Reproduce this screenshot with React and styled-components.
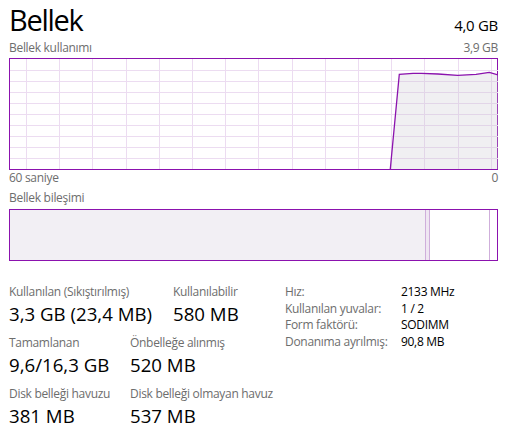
import React from 'react';
import styled, { createGlobalStyle } from 'styled-components';

const PURPLE = '#8b12ae';
const GRID = '#ecdcf1';
const MUTED = '#6d6d6d';

const GlobalStyle = createGlobalStyle`
  body {
    margin: 0;
    background: #fff;
    color: #000;
    font-family: "Open Sans", "Noto Sans", sans-serif;
  }
`;

const usage = [
  [380.3, 110], [389.3, 15.3], [403, 14.3], [411.7, 14.3], [428, 15], [447.7, 16.3],
  [466, 15.3], [479.3, 13.3], [488, 16],
];

function Graph() {
  const cols = [];
  for (let k = 0; k < 15; k++) cols.push(Math.round(16 + 33.2 * k) + 0.5);
  const rows = [];
  for (let j = 1; j < 10; j++) rows.push(j * 11 + 0.5);
  const line = usage.map(([x, y]) => `${x},${y}`).join(' ');
  const area = `${line} 488,110 380.3,110`;

  return (
    <svg width="488" height="110" viewBox="0 0 488 110">
      {cols.map((x) => (
        <line key={'c' + x} x1={x} y1="0" x2={x} y2="110" stroke={GRID} strokeWidth="1" />
      ))}
      {rows.map((y) => (
        <line key={'r' + y} x1="0" y1={y} x2="488" y2={y} stroke={GRID} strokeWidth="1" />
      ))}
      <polygon points={area} fill="rgba(200,195,206,0.27)" />
      <polyline points={line} fill="none" stroke={PURPLE} strokeWidth="1.3" />
    </svg>
  );
}

function App() {
  return (
    <>
      <GlobalStyle />
      <Page>
        <Header>
          <Title>Bellek</Title>
          <Total>4,0 GB</Total>
        </Header>

        <Caption $top={0}>
          <span>Bellek kullanımı</span>
          <span>3,9 GB</span>
        </Caption>
        <Chart>
          <Graph />
        </Chart>
        <Caption $top={0}>
          <span>60 saniye</span>
          <span>0</span>
        </Caption>

        <Caption $top={4}>
          <span>Bellek bileşimi</span>
        </Caption>
        <Composition>
          <Segment $w={415} $fill="#f2eff4" />
          <Segment $w={5} $fill="#efe6f2" $left $right />
          <Segment $w={60} $right />
          <Segment $grow />
        </Composition>

        <Stats>
          <StatGrid>
            <StatRow>
              <Stat $w={164}>
                <StatLabel>Kullanılan (Sıkıştırılmış)</StatLabel>
                <StatValue>3,3 GB (23,4 MB)</StatValue>
              </Stat>
              <Stat>
                <StatLabel>Kullanılabilir</StatLabel>
                <StatValue>580 MB</StatValue>
              </Stat>
            </StatRow>
            <StatRow>
              <Stat $w={121}>
                <StatLabel>Tamamlanan</StatLabel>
                <StatValue>9,6/16,3 GB</StatValue>
              </Stat>
              <Stat>
                <StatLabel>Önbelleğe alınmış</StatLabel>
                <StatValue>520 MB</StatValue>
              </Stat>
            </StatRow>
            <StatRow>
              <Stat $w={121}>
                <StatLabel>Disk belleği havuzu</StatLabel>
                <StatValue>381 MB</StatValue>
              </Stat>
              <Stat>
                <StatLabel>Disk belleği olmayan havuz</StatLabel>
                <StatValue>537 MB</StatValue>
              </Stat>
            </StatRow>
          </StatGrid>

          <InfoTable>
            <InfoLabel>Hız:</InfoLabel>
            <InfoValue>2133 MHz</InfoValue>
            <InfoLabel>Kullanılan yuvalar:</InfoLabel>
            <InfoValue>1 / 2</InfoValue>
            <InfoLabel>Form faktörü:</InfoLabel>
            <InfoValue>SODIMM</InfoValue>
            <InfoLabel>Donanıma ayrılmış:</InfoLabel>
            <InfoValue>90,8 MB</InfoValue>
          </InfoTable>
        </Stats>
      </Page>
    </>
  );
}

const Page = styled.div`
  width: 516px;
  box-sizing: border-box;
  padding: 0 18px 0 9px;
`;

const Header = styled.header`
  display: flex;
  justify-content: space-between;
  align-items: baseline;
`;

const Title = styled.h1`
  margin: 0;
  font-size: 29px;
  font-weight: 400;
  line-height: 40px;
  letter-spacing: -1.3px;
`;

const Total = styled.div`
  font-size: 15px;
  line-height: 20px;
  letter-spacing: -0.3px;
`;

const Caption = styled.div`
  display: flex;
  justify-content: space-between;
  margin-top: ${(p) => p.$top}px;
  font-size: 12px;
  line-height: 16px;
  letter-spacing: -0.3px;
  color: ${MUTED};
`;

const Chart = styled.div`
  margin-top: 2px;
  height: 112px;
  box-sizing: border-box;
  border: 1px solid ${PURPLE};

  svg {
    display: block;
  }
`;

const Composition = styled.div`
  display: flex;
  margin-top: 3px;
  height: 52px;
  box-sizing: border-box;
  border: 1px solid ${PURPLE};
`;

const Segment = styled.div`
  box-sizing: border-box;
  flex: ${(p) => (p.$grow ? '1' : `0 0 ${p.$w}px`)};
  background: ${(p) => p.$fill || '#fff'};
  border-left: ${(p) => (p.$left ? '1px solid #cfaedb' : 'none')};
  border-right: ${(p) => (p.$right ? '1px solid #cfaedb' : 'none')};
`;

const Stats = styled.section`
  display: flex;
  align-items: flex-start;
  margin-top: 23px;
`;

const StatGrid = styled.div`
  display: flex;
  flex-direction: column;
  gap: 7px;
  width: 276px;
`;

const StatRow = styled.div`
  display: flex;
`;

const Stat = styled.div`
  flex: ${(p) => (p.$w ? `0 0 ${p.$w}px` : '1')};
  white-space: nowrap;
`;

const StatLabel = styled.div`
  font-size: 12px;
  line-height: 16px;
  letter-spacing: -0.3px;
  color: ${MUTED};
`;

const StatValue = styled.div`
  font-size: 18.67px;
  line-height: 28px;
`;

const InfoTable = styled.div`
  display: grid;
  grid-template-columns: 116px auto;
  font-size: 12px;
  line-height: 16.67px;
  letter-spacing: -0.3px;
  white-space: nowrap;
`;

const InfoLabel = styled.div`
  color: ${MUTED};
`;

const InfoValue = styled.div`
  color: #000;
`;

export default App;
